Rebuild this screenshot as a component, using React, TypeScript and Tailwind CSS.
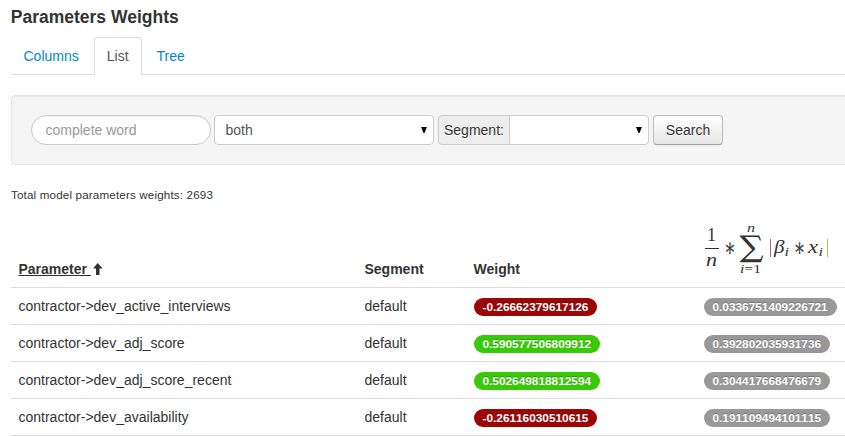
const rows = [
  { name: 'contractor->dev_active_interviews', segment: 'default', weight: '-0.26662379617126', mean: '0.0336751409226721' },
  { name: 'contractor->dev_adj_score', segment: 'default', weight: '0.590577506809912', mean: '0.392802035931736' },
  { name: 'contractor->dev_adj_score_recent', segment: 'default', weight: '0.502649818812594', mean: '0.304417668476679' },
  { name: 'contractor->dev_availability', segment: 'default', weight: '-0.26116030510615', mean: '0.191109494101115' },
];

const GRID = 'grid grid-cols-[346px_109px_230px_160px]';

function Badge({ value, color }: { value: string; color: string }) {
  return (
    <span
      className={`inline-block h-[18px] rounded-[9px] pr-[9px] pl-[8.5px] py-[2px] text-[11.844px] leading-[14px] font-bold text-white [font-kerning:none] [text-shadow:0_-1px_0_rgba(0,0,0,0.25)] ${color}`}
    >
      {value}
    </span>
  );
}

function Caret() {
  return (
    <svg width="6" height="6" viewBox="0 0 6 6" className="shrink-0">
      <path d="M0 0h6L3.5 6h-1z" fill="#000" />
    </svg>
  );
}

function Formula() {
  return (
    <svg
      width="130"
      height="62"
      viewBox="704 216 130 62"
      fill="#333"
      className="block font-normal [font-family:'Liberation_Serif',serif]"
    >
      <text x="707" y="241" fontSize="18">1</text>
      <path d="M705 248h14v1h-14z" />
      <text x="706" y="266" fontSize="18" fontStyle="italic" textLength="11" lengthAdjust="spacingAndGlyphs">n</text>
      <text x="725" y="253" fontSize="18" textLength="10" lengthAdjust="spacingAndGlyphs" stroke="#333" strokeWidth="0.3" className="[font-family:'DejaVu_Math_TeX_Gyre',serif]">∗</text>
      <text x="747" y="232" fontSize="13" fontStyle="italic" textLength="8" lengthAdjust="spacingAndGlyphs">n</text>
      <text x="737.5" y="256" fontSize="25.5" textLength="28" lengthAdjust="spacingAndGlyphs" className="[font-family:'DejaVu_Math_TeX_Gyre',serif]">∑</text>
      <text x="740" y="273" fontSize="13" textLength="21" lengthAdjust="spacingAndGlyphs">
        <tspan fontStyle="italic">i</tspan>=1
      </text>
      <path d="M770 239h1v18h-1z" fill="#94707f" />
      <text x="774" y="253" fontSize="18" fontStyle="italic" textLength="10.5" lengthAdjust="spacingAndGlyphs">β</text>
      <text x="784.5" y="256" fontSize="13" fontStyle="italic" textLength="4.5" lengthAdjust="spacingAndGlyphs">i</text>
      <text x="794.5" y="253" fontSize="18" textLength="10" lengthAdjust="spacingAndGlyphs" stroke="#333" strokeWidth="0.3" className="[font-family:'DejaVu_Math_TeX_Gyre',serif]">∗</text>
      <text x="808" y="253" fontSize="18" fontStyle="italic" textLength="10" lengthAdjust="spacingAndGlyphs">x</text>
      <text x="818.5" y="256" fontSize="13" fontStyle="italic" textLength="4.5" lengthAdjust="spacingAndGlyphs">i</text>
      <path d="M827 239h1v18h-1z" fill="#f2a84c" />
    </svg>
  );
}

export default function App() {
  return (
    <div className="h-[437px] w-full overflow-hidden bg-white pl-[11px] text-[14px] leading-[20px] text-[#333] [font-family:'Liberation_Sans',Arial,sans-serif]">
      <h1 className="-ml-[0.25px] pt-[7px] text-[17.5px] leading-[20px] font-bold">Parameters Weights</h1>

      <nav className="mt-[10px] flex h-[38px] border-b border-[#ddd]">
        <a className="mr-[2px] h-[38px] border border-transparent pr-[12.5px] pl-[11.5px] py-[8px] text-[#0088cc]">Columns</a>
        <a className="mr-[2px] h-[38px] rounded-t-[4px] border border-b-0 border-[#ddd] bg-white pr-[12.5px] pl-[11.5px] py-[8px] text-[#555]">List</a>
        <a className="h-[38px] border border-transparent pl-[11.5px] py-[8px] text-[#0088cc]">Tree</a>
      </nav>

      <div className="mt-[20px] flex h-[70px] w-[900px] items-center rounded-[4px] border border-[#e3e3e3] bg-[#f5f5f5] pl-[19px] shadow-[inset_0_1px_1px_rgba(0,0,0,0.05)]">
        <input
          placeholder="complete word"
          className="h-[30px] w-[180px] rounded-[15px] border border-[#ccc] bg-white px-[13.5px] py-0 text-[14px] shadow-[inset_0_1px_1px_rgba(0,0,0,0.075)] placeholder:text-[#999]"
        />
        <div className="ml-[3px] flex h-[30px] w-[220px] items-center justify-between rounded-[4px] border border-[#ccc] bg-white pr-[6px] pl-[10.5px] text-[#555]">
          both
          <Caret />
        </div>
        <div className="ml-[4px] flex h-[30px]">
          <span className="w-[72px] rounded-l-[4px] border border-[#ccc] bg-[#eee] px-[5px] py-[4px] [text-shadow:0_1px_0_#fff]">Segment:</span>
          <div className="-ml-px flex w-[140px] items-center justify-end rounded-r-[4px] border border-[#ccc] bg-white pr-[6px]">
            <Caret />
          </div>
        </div>
        <button className="ml-[4px] h-[30px] w-[70px] rounded-[4px] border border-[#bbb] border-b-[#a2a2a2] bg-linear-to-b from-white to-[#e6e6e6] text-center shadow-[inset_0_1px_0_rgba(255,255,255,0.2),0_1px_2px_rgba(0,0,0,0.05)] [text-shadow:0_1px_1px_rgba(255,255,255,0.75)]">
          Search
        </button>
      </div>

      <p className="mt-[20px] text-[11.6px] leading-[20px] tracking-[0.17px]">Total model parameters weights: 2693</p>

      <div className={`${GRID} mt-[9px] h-[73px] items-end font-bold`}>
        <div className="flex px-[7.5px] pb-[8px]">
          <span className="whitespace-pre underline">Parameter </span>
          <svg width="10" height="12" viewBox="0 0 10 12" className="mt-[4px] ml-[2px]">
            <path d="M4.7 0 9.6 5.5H6.5V12H3V5.5H0z" fill="#333" />
          </svg>
        </div>
        <div className="px-[7.5px] pb-[8px]">Segment</div>
        <div className="px-[7.5px] pb-[8px]">Weight</div>
        <div className="px-[8px] pb-[9px]">
          <Formula />
        </div>
      </div>

      {rows.map((row) => (
        <div key={row.name} className={`${GRID} h-[37px] border-t border-[#ddd]`}>
          <div className="px-[7.5px] py-[8px]">{row.name}</div>
          <div className="px-[7.5px] py-[8px]">{row.segment}</div>
          <div className="px-[8px] pt-[10px] leading-none">
            <Badge value={row.weight} color={row.weight.startsWith('-') ? 'bg-[#9d0606]' : 'bg-[#38ca06]'} />
          </div>
          <div className="px-[8px] pt-[10px] leading-none">
            <Badge value={row.mean} color="bg-[#999]" />
          </div>
        </div>
      ))}
      <div className="border-t border-[#ddd]" />
    </div>
  );
}
